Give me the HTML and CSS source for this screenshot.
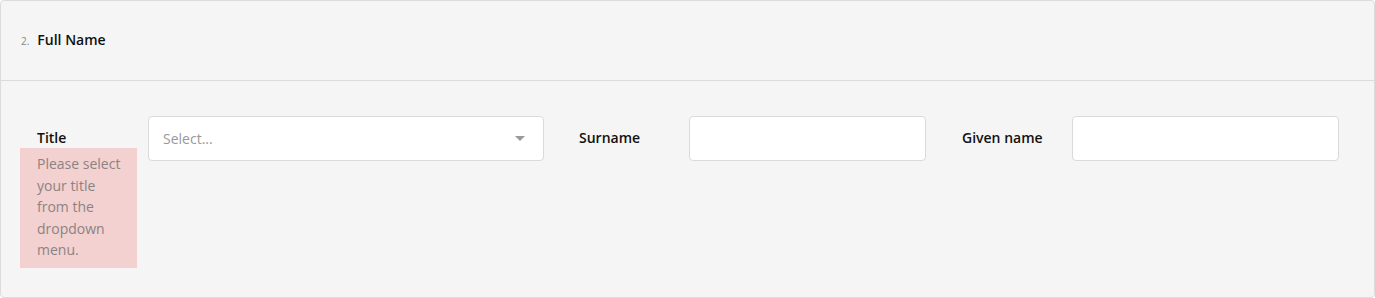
FILE: index.html
```html
<!DOCTYPE html>
<html lang="en">
<head>
    <meta charset="UTF-8">
    <meta name="viewport" content="width=device-width, initial-scale=1.0">
    <title>Full Name</title>
    <link rel="stylesheet" href="styles.css">
</head>
<body>
    <div class="card">
        <div class="card-header">
            <span class="step">2.</span>
            <span class="card-title">Full Name</span>
        </div>
        <div class="card-body">
            <div class="field field-title">
                <div class="field-label">
                    <div class="label-text">Title</div>
                    <div class="error-msg">Please select your title from the dropdown menu.</div>
                </div>
                <div class="select">
                    <span class="placeholder">Select...</span>
                    <span class="arrow"></span>
                </div>
            </div>
            <div class="field field-surname">
                <div class="field-label">
                    <div class="label-text">Surname</div>
                </div>
                <input class="text-input" type="text">
            </div>
            <div class="field field-given">
                <div class="field-label">
                    <div class="label-text">Given name</div>
                </div>
                <input class="text-input" type="text">
            </div>
        </div>
    </div>
</body>
</html>
```

FILE: styles.css
```css
body {
    margin: 0;
    font-family: 'Open Sans', 'Noto Sans', sans-serif;
    background-color: #ffffff;
}
.card {
    width: 1375px;
    height: 298px;
    box-sizing: border-box;
    border: 1px solid #dcdcdc;
    border-radius: 4px;
    background-color: #f5f5f5;
}
.card-header {
    height: 80px;
    box-sizing: border-box;
    border-bottom: 1px solid #dcdcdc;
    display: flex;
    align-items: center;
    padding: 0 0 2px 20px;
}
.step {
    font-size: 10px;
    color: #888;
    margin-right: 8px;
    margin-top: 2px;
}
.card-title {
    font-size: 14px;
    font-weight: 600;
    color: #111;
}
.card-body {
    display: flex;
    align-items: flex-start;
    padding: 35px 0 0 19px;
    gap: 18px;
}
.field {
    display: flex;
    align-items: flex-start;
    gap: 11px;
}
.field-surname, .field-given {
    gap: 10px;
}
.field-given {
    margin-left: 1px;
}
.field-label {
    width: 117px;
}
.label-text {
    font-size: 14px;
    font-weight: 600;
    color: #111;
    line-height: 20px;
    padding: 12px 0 0 17px;
}
.error-msg {
    background-color: #f2d1d0;
    color: #8d8283;
    font-size: 14px;
    line-height: 21.5px;
    padding: 5px 10px 7px 17px;
}
.select, .text-input {
    box-sizing: border-box;
    height: 45px;
    background-color: #fff;
    border: 1px solid #dadada;
    border-radius: 4px;
}
.select {
    width: 396px;
    display: flex;
    align-items: center;
    justify-content: space-between;
    padding: 0 18px 0 14px;
}
.placeholder {
    font-size: 14px;
    color: #999;
}
.arrow {
    width: 0;
    height: 0;
    border-left: 5px solid transparent;
    border-right: 5px solid transparent;
    border-top: 5px solid #999;
}
.text-input {
    display: block;
    margin: 0;
    padding: 0 10px;
    font: inherit;
}
.field-surname .text-input {
    width: 237px;
}
.field-given .text-input {
    width: 267px;
}
```
